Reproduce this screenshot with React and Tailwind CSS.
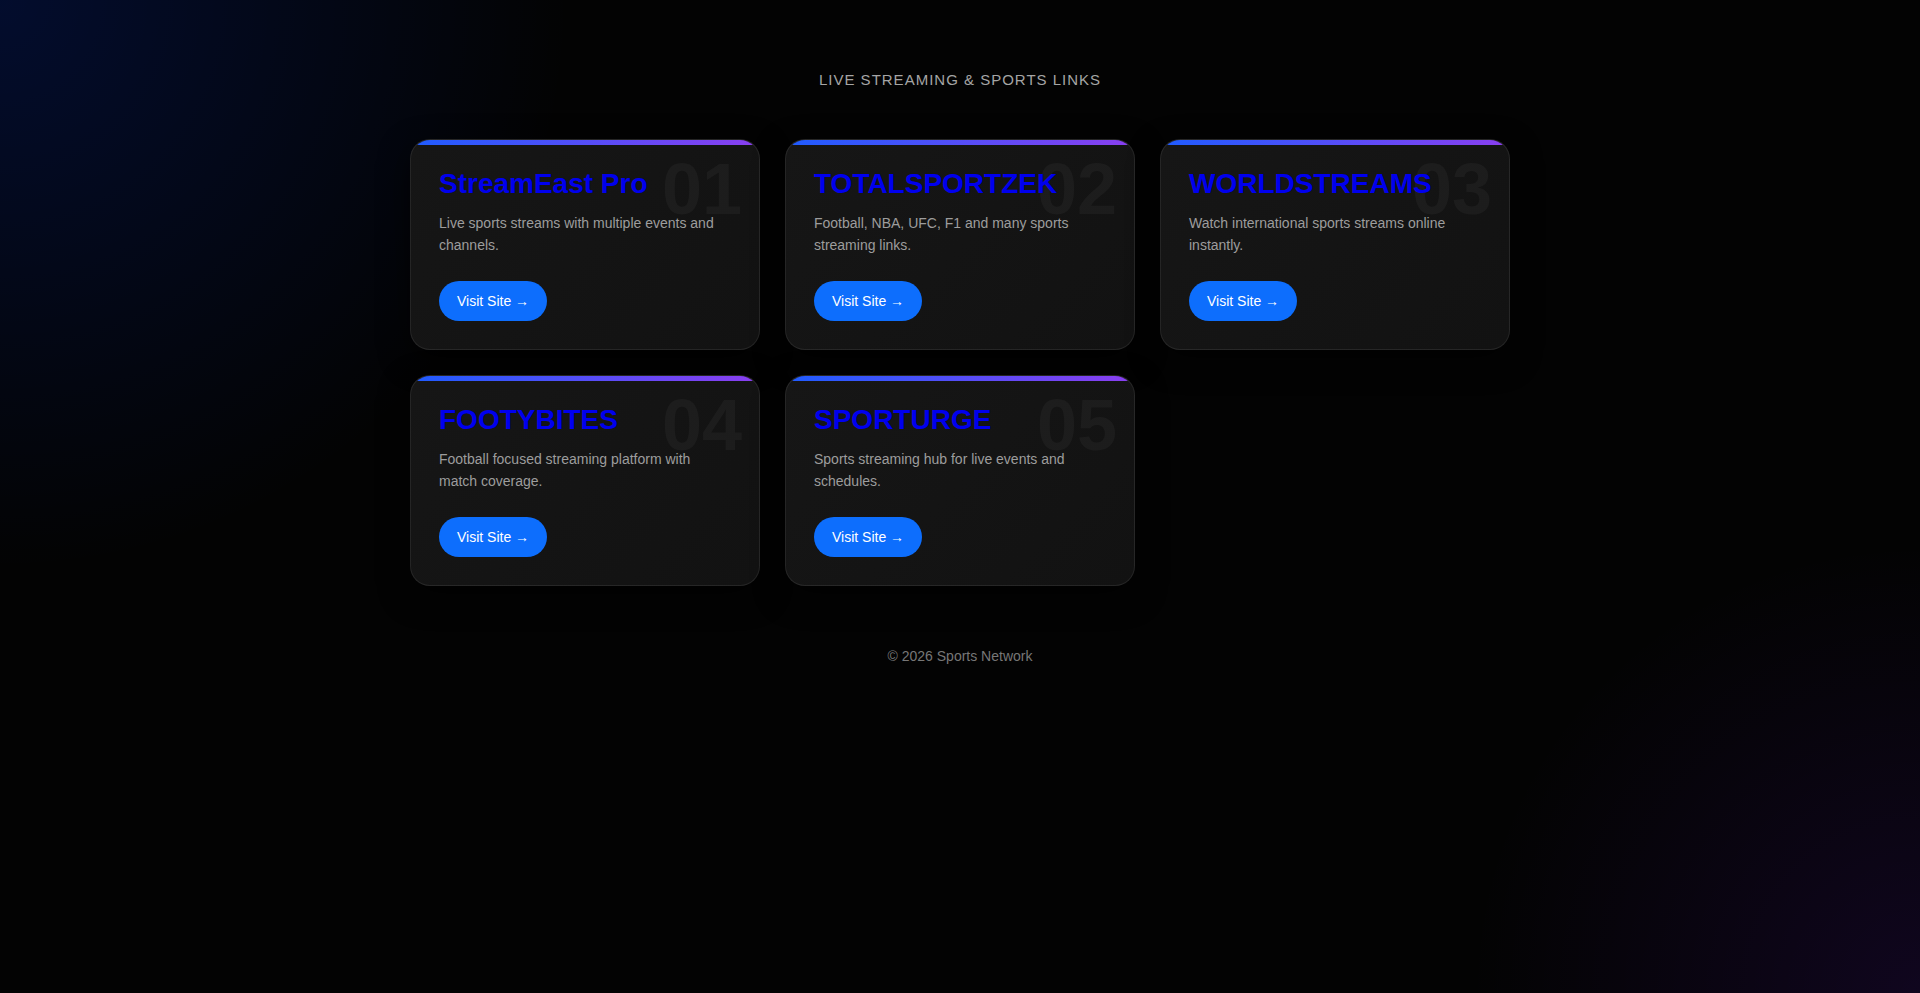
import React from "react";

const sites = [
  { name: "StreamEast Pro", desc: "Live sports streams with multiple events and channels." },
  { name: "TOTALSPORTZEK", desc: "Football, NBA, UFC, F1 and many sports streaming links." },
  { name: "WORLDSTREAMS", desc: "Watch international sports streams online instantly." },
  { name: "FOOTYBITES", desc: "Football focused streaming platform with match coverage." },
  { name: "SPORTURGE", desc: "Sports streaming hub for live events and schedules." },
];

function SiteCard({ site, index }) {
  const num = String(index + 1).padStart(2, "0");
  return (
    <div className="relative overflow-hidden rounded-[20px] border border-white/[0.08] bg-[linear-gradient(135deg,#161616,#121212)] px-[28px] pt-[28px] pb-[28px] shadow-[0_10px_30px_rgba(0,0,0,0.6)]">
      <div className="absolute left-0 right-0 top-0 h-[5px] bg-[linear-gradient(90deg,#1f5cff,#8a3ff0)]" />
      <span className="absolute right-[17px] top-[13px] text-[72px] font-bold leading-none text-white/[0.04] select-none">
        {num}
      </span>
      <h2 className="relative text-[28px] font-bold leading-[32px] text-[#0000ee]">{site.name}</h2>
      <p className="relative mt-[12px] max-w-[290px] text-[14px] leading-[22.4px] text-[#9d9d9d]">{site.desc}</p>
      <a
        href="#"
        className="relative mt-[24px] inline-block rounded-full bg-[#0d6efd] px-[18px] py-[10px] text-[14px] leading-[20px] text-white"
      >
        Visit Site →
      </a>
    </div>
  );
}

export default function App() {
  return (
    <div
      className="min-h-[993px] bg-[#030303] bg-[radial-gradient(760px_circle_at_0_0,rgba(0,60,255,0.17),transparent_75%),radial-gradient(600px_circle_at_100%_100%,rgba(120,30,255,0.11),transparent_75%)]"
      style={{ fontFamily: '"Liberation Sans", Arial, sans-serif' }}
    >
      <div className="mx-auto w-[1100px] pt-[70px]">
        <h1 className="text-center text-[15px] leading-[20px] tracking-[1px] text-[#a5a5a5]">
          LIVE STREAMING &amp; SPORTS LINKS
        </h1>
        <div className="mt-[49px] grid grid-cols-3 gap-[25px]">
          {sites.map((s, i) => (
            <SiteCard key={s.name} site={s} index={i} />
          ))}
        </div>
        <footer className="mt-[60px] text-center text-[14px] leading-[20px] text-[#777]">
          © 2026 Sports Network
        </footer>
      </div>
    </div>
  );
}
